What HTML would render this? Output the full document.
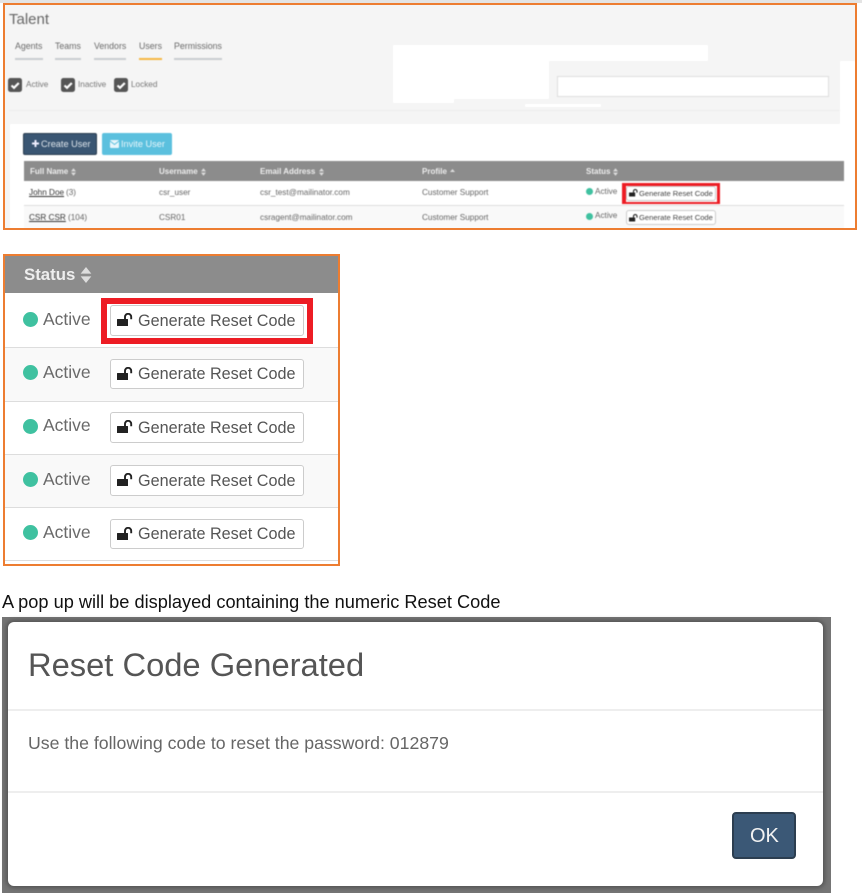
<!DOCTYPE html>
<html><head><meta charset="utf-8"><style>
html,body{margin:0;padding:0;background:#fff}
#p{position:relative;width:862px;height:895px;overflow:hidden;background:#fff;font-family:"Liberation Sans",sans-serif}
#p div,#p span.t{position:absolute;box-sizing:border-box}
.t{white-space:nowrap;line-height:1;color:#6a6a6a}
.h{color:#eee;font-weight:bold;font-size:8px}
.c{font-size:8.2px;color:#666}
.bt{background:#fff;border:1px solid #ccc;border-radius:3px}
.blur{left:0;top:0;width:862px;height:240px;filter:blur(.4px)}
.blur2{left:0;top:240px;width:862px;height:340px;filter:blur(.25px)}
svg{position:absolute;overflow:visible}
</style></head><body><div id="p">
<svg width="0" height="0" style="position:absolute"><defs>
<symbol id="lk" viewBox="0 0 16 13"><rect x="0" y="6" width="11" height="7.500" rx=".5" fill="#222"/><path d="M8 6V3.900a3.100 3.100 0 0 1 6.200 0V6.300" fill="none" stroke="#222" stroke-width="1.900"/></symbol>
<symbol id="sort" viewBox="0 0 8 12"><path d="M4 0L8 5H0ZM4 12L8 7H0Z" fill="#ddd"/></symbol>
<symbol id="ck" viewBox="0 0 14 14"><rect width="14" height="14" rx="2.500" fill="#555"/><path d="M3.500 7.500L6 9.800L10.800 5" fill="none" stroke="#fff" stroke-width="2.200"/></symbol>
</defs></svg>

<div style="left:0;top:0;width:862px;height:3px;background:#e4e4e4"></div>
<div style="left:3px;top:3px;width:854px;height:227px;background:#f5f5f5"></div>

<div class="blur">
<div style="left:393px;top:45px;width:315px;height:16px;background:#fff"></div>
<div style="left:393px;top:45px;width:61px;height:58px;background:#fff"></div>
<div style="left:454px;top:61px;width:95px;height:38px;background:#fff"></div>
<div style="left:525px;top:104px;width:76px;height:3px;background:#fff"></div>
<div style="left:840px;top:61px;width:15px;height:168px;background:#fff"></div>
<div style="left:9px;top:110px;width:831px;height:1px;background:#ececec"></div>
<div style="left:10px;top:124px;width:845px;height:105px;background:#fff"></div>
<div style="left:557px;top:76px;width:272px;height:21px;background:#fff;border:1px solid #ddd"></div>

<span class="t" style="left:9px;top:12px;font-size:15px;color:#666">Talent</span>
<span class="t" style="left:15px;top:42px;font-size:8.800px">Agents</span>
<span class="t" style="left:55px;top:42px;font-size:8.800px">Teams</span>
<span class="t" style="left:94px;top:42px;font-size:8.800px">Vendors</span>
<span class="t" style="left:139px;top:42px;font-size:8.800px">Users</span>
<span class="t" style="left:174px;top:42px;font-size:8.800px">Permissions</span>
<div style="left:15px;top:58px;width:28px;height:2px;background:#c8ccd0"></div>
<div style="left:55px;top:58px;width:26px;height:2px;background:#c8ccd0"></div>
<div style="left:94px;top:58px;width:32px;height:2px;background:#c8ccd0"></div>
<div style="left:139px;top:58px;width:23px;height:2px;background:#f5b642"></div>
<div style="left:174px;top:58px;width:48px;height:2px;background:#c8ccd0"></div>

<svg style="left:8px;top:78px" width="14" height="14"><use href="#ck"/></svg>
<span class="t" style="left:26px;top:81px;font-size:8.200px;color:#777">Active</span>
<svg style="left:61px;top:78px" width="14" height="14"><use href="#ck"/></svg>
<span class="t" style="left:78px;top:81px;font-size:8.200px;color:#777">Inactive</span>
<svg style="left:114px;top:78px" width="14" height="14"><use href="#ck"/></svg>
<span class="t" style="left:131px;top:81px;font-size:8.200px;color:#777">Locked</span>

<div style="left:23px;top:133px;width:74px;height:22px;background:#3a5673;border:1px solid #2c3e50;border-radius:2px"></div>
<svg style="left:32px;top:140px" width="7" height="7"><path d="M3.500 0V7M0 3.500H7" stroke="#eef" stroke-width="2"/></svg>
<span class="t" style="left:41px;top:139.500px;font-size:9.200px;color:#dfe6ec">Create User</span>
<div style="left:102px;top:133px;width:70px;height:22px;background:#5bc0de;border-radius:2px"></div>
<svg style="left:110px;top:140px" width="9" height="8"><rect width="9" height="8" rx="1" fill="#e8f6fb"/><path d="M0 1L4.500 4.500L9 1" fill="none" stroke="#5bc0de"/></svg>
<span class="t" style="left:121px;top:139.500px;font-size:9.200px;color:#e8f6fb">Invite User</span>

<div style="left:24px;top:161px;width:820px;height:20px;background:#8c8c8c"></div>
<span class="t h" style="left:30px;top:168px">Full Name</span>
<svg style="left:71px;top:168px" width="5" height="8"><use href="#sort"/></svg>
<span class="t h" style="left:159px;top:168px">Username</span>
<svg style="left:201px;top:168px" width="5" height="8"><use href="#sort"/></svg>
<span class="t h" style="left:260px;top:168px">Email Address</span>
<svg style="left:319px;top:168px" width="5" height="8"><use href="#sort"/></svg>
<span class="t h" style="left:422px;top:168px">Profile</span>
<svg style="left:450px;top:169px" width="5" height="4"><path d="M2.500 0L5 3H0Z" fill="#ddd"/></svg>
<span class="t h" style="left:586px;top:168px">Status</span>
<svg style="left:613px;top:168px" width="5" height="8"><use href="#sort"/></svg>

<div style="left:24px;top:205px;width:820px;height:24px;background:#f9f9f9;border-top:1px solid #ddd"></div>

<span class="t c" style="left:29px;top:189px;color:#333;text-decoration:underline">John Doe</span>
<span class="t c" style="left:66px;top:189px">(3)</span>
<span class="t c" style="left:159px;top:189px">csr_user</span>
<span class="t c" style="left:260px;top:189px">csr_test@mailinator.com</span>
<span class="t c" style="left:422px;top:189px">Customer Support</span>
<div style="left:586px;top:188px;width:7px;height:7px;border-radius:50%;background:#3fc1a0"></div>
<span class="t c" style="left:595px;top:188px">Active</span>
<div style="left:622px;top:183px;width:98px;height:21px;background:#ed1c24"></div>
<div style="left:625.500px;top:186px;width:91px;height:15.500px;background:#fff"></div>
<div class="bt" style="left:626px;top:186px;width:90px;height:15px"></div>
<svg style="left:629px;top:189px" width="9" height="7.500"><use href="#lk"/></svg>
<span class="t" style="left:639px;top:189.500px;font-size:7.600px;color:#444">Generate Reset Code</span>

<span class="t c" style="left:29px;top:213.500px;color:#333;text-decoration:underline">CSR CSR</span>
<span class="t c" style="left:68px;top:213.500px">(104)</span>
<span class="t c" style="left:159px;top:213.500px">CSR01</span>
<span class="t c" style="left:260px;top:213.500px">csragent@mailinator.com</span>
<span class="t c" style="left:422px;top:213.500px">Customer Support</span>
<div style="left:586px;top:213px;width:7px;height:7px;border-radius:50%;background:#3fc1a0"></div>
<span class="t c" style="left:595px;top:212px">Active</span>
<div class="bt" style="left:626px;top:210px;width:90px;height:15px"></div>
<svg style="left:629px;top:213.500px" width="9" height="7.500"><use href="#lk"/></svg>
<span class="t" style="left:639px;top:213.500px;font-size:7.600px;color:#444">Generate Reset Code</span>
</div>

<div style="left:3px;top:3px;width:854px;height:227px;border:2px solid #ed7d31"></div>

<!-- status panel -->
<div class="blur2">
<div style="left:4px;top:15px;width:335px;height:38px;background:#8c8c8c"></div>
<span class="t" style="left:24px;top:27px;font-size:16.800px;font-weight:bold;color:#eee">Status</span>
<svg style="left:80px;top:27px" width="12" height="16"><use href="#sort"/></svg>
<div style="left:4px;top:107px;width:335px;height:1px;background:#ddd"></div>
<div style="left:4px;top:108px;width:335px;height:53px;background:#f9f9f9"></div>
<div style="left:4px;top:161px;width:335px;height:1px;background:#ddd"></div>
<div style="left:4px;top:214px;width:335px;height:1px;background:#ddd"></div>
<div style="left:4px;top:215px;width:335px;height:52px;background:#f9f9f9"></div>
<div style="left:4px;top:267px;width:335px;height:1px;background:#ddd"></div>
<div style="left:4px;top:320px;width:335px;height:1px;background:#ddd"></div>

<div style="left:23px;top:72px;width:15px;height:15px;border-radius:50%;background:#3fc1a0"></div>
<span class="t" style="left:43px;top:71px;font-size:17.500px;color:#6a6a6a">Active</span>
<div style="left:101px;top:58px;width:212px;height:46px;background:#ed1c24"></div>
<div style="left:107px;top:64px;width:200px;height:34px;background:#fff"></div>
<div class="bt" style="left:110px;top:65px;width:194px;height:31px"></div>
<svg style="left:117px;top:73px" width="16" height="13"><use href="#lk"/></svg>
<span class="t" style="left:138px;top:73px;font-size:16.200px;color:#555">Generate Reset Code</span>

<div style="left:23px;top:125px;width:15px;height:15px;border-radius:50%;background:#3fc1a0"></div>
<span class="t" style="left:43px;top:124px;font-size:17.500px">Active</span>
<div class="bt" style="left:110px;top:119px;width:194px;height:30px"></div>
<svg style="left:117px;top:127px" width="16" height="13"><use href="#lk"/></svg>
<span class="t" style="left:138px;top:126px;font-size:16.200px;color:#555">Generate Reset Code</span>

<div style="left:23px;top:179px;width:15px;height:15px;border-radius:50%;background:#3fc1a0"></div>
<span class="t" style="left:43px;top:177px;font-size:17.500px">Active</span>
<div class="bt" style="left:110px;top:172px;width:194px;height:31px"></div>
<svg style="left:117px;top:180px" width="16" height="13"><use href="#lk"/></svg>
<span class="t" style="left:138px;top:180px;font-size:16.200px;color:#555">Generate Reset Code</span>

<div style="left:23px;top:232px;width:15px;height:15px;border-radius:50%;background:#3fc1a0"></div>
<span class="t" style="left:43px;top:231px;font-size:17.500px">Active</span>
<div class="bt" style="left:110px;top:225px;width:194px;height:31px"></div>
<svg style="left:117px;top:233px" width="16" height="13"><use href="#lk"/></svg>
<span class="t" style="left:138px;top:233px;font-size:16.200px;color:#555">Generate Reset Code</span>

<div style="left:23px;top:285px;width:15px;height:15px;border-radius:50%;background:#3fc1a0"></div>
<span class="t" style="left:43px;top:284px;font-size:17.500px">Active</span>
<div class="bt" style="left:110px;top:279px;width:194px;height:30px"></div>
<svg style="left:117px;top:287px" width="16" height="13"><use href="#lk"/></svg>
<span class="t" style="left:138px;top:286px;font-size:16.200px;color:#555">Generate Reset Code</span>
</div>

<div style="left:3px;top:254px;width:337px;height:312px;border:2px solid #ed7d31"></div>

<span class="t" style="left:2px;top:593px;font-size:18.200px;color:#111">A pop up will be displayed containing the numeric Reset Code</span>

<!-- modal -->
<div style="left:2px;top:617px;width:829px;height:276px;background:#757575;overflow:hidden"></div>
<div style="left:8px;top:622px;width:815px;height:264px;background:#fff;border-radius:6px;box-shadow:0 0 4px 2px #555"></div>
<span class="t" style="left:28px;top:649px;font-size:32.700px;color:#555">Reset Code Generated</span>
<div style="left:8px;top:709px;width:815px;height:2px;background:#eee"></div>
<span class="t" style="left:28px;top:735px;font-size:17.700px;color:#666">Use the following code to reset the password: 012879</span>
<div style="left:8px;top:791px;width:815px;height:2px;background:#eee"></div>
<div style="left:732px;top:812px;width:64px;height:47px;background:#3b5876;border:2px solid #2c3e50;border-radius:4px"></div>
<span class="t" style="left:750px;top:826px;font-size:20px;color:#f2f2f2">OK</span>
</div></body></html>
